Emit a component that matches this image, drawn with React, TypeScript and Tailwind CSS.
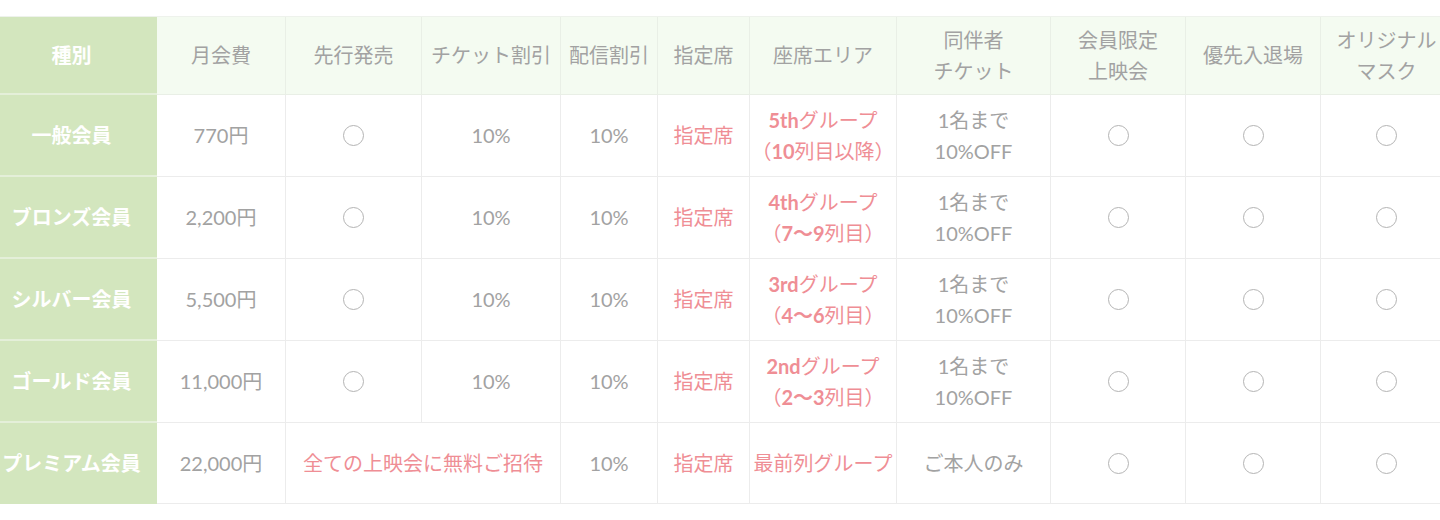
import type { ReactNode } from 'react';

type Cell = ReactNode | { span: number; content: ReactNode };

const headers = [
  '月会費',
  '先行発売',
  'チケット割引',
  '配信割引',
  '指定席',
  '座席エリア',
  <>同伴者<br />チケット</>,
  <>会員限定<br />上映会</>,
  '優先入退場',
  <>オリジナル<br />マスク</>,
];

const Circle = () => (
  <span className="inline-block w-[21px] h-[21px] rounded-full border-[1.5px] border-[#b4b4b4]" />
);

const Pink = ({ children }: { children: ReactNode }) => (
  <span className="text-[#ef8e95]">{children}</span>
);

const Area = ({ head, tail }: { head: string; tail: ReactNode }) => (
  <Pink>
    <b className="font-bold">{head}</b>グループ
    <br />
    {tail}
  </Pink>
);

const companion = <>1名まで<br />10%OFF</>;

const rows: { name: string; cells: Cell[] }[] = [
  {
    name: '一般会員',
    cells: ['770円', <Circle />, '10%', '10%', <Pink>指定席</Pink>,
      <Area head="5th" tail={<>（<b className="font-bold">10</b>列目以降）</>} />,
      companion, <Circle />, <Circle />, <Circle />],
  },
  {
    name: 'ブロンズ会員',
    cells: ['2,200円', <Circle />, '10%', '10%', <Pink>指定席</Pink>,
      <Area head="4th" tail={<>（<b className="font-bold">7〜9</b>列目）</>} />,
      companion, <Circle />, <Circle />, <Circle />],
  },
  {
    name: 'シルバー会員',
    cells: ['5,500円', <Circle />, '10%', '10%', <Pink>指定席</Pink>,
      <Area head="3rd" tail={<>（<b className="font-bold">4〜6</b>列目）</>} />,
      companion, <Circle />, <Circle />, <Circle />],
  },
  {
    name: 'ゴールド会員',
    cells: ['11,000円', <Circle />, '10%', '10%', <Pink>指定席</Pink>,
      <Area head="2nd" tail={<>（<b className="font-bold">2〜3</b>列目）</>} />,
      companion, <Circle />, <Circle />, <Circle />],
  },
  {
    name: 'プレミアム会員',
    cells: ['22,000円', { span: 2, content: <Pink>全ての上映会に無料ご招待</Pink> }, '10%',
      <Pink>指定席</Pink>, <Pink>最前列グループ</Pink>, 'ご本人のみ', <Circle />, <Circle />, <Circle />],
  },
];

const isSpan = (c: Cell): c is { span: number; content: ReactNode } =>
  typeof c === 'object' && c !== null && 'span' in (c as object);

export default function App() {
  return (
    <div
      className="w-[1440px] h-[520px] overflow-hidden bg-white pt-4"
      style={{ fontFamily: 'Lato, "Noto Sans CJK JP", sans-serif' }}
    >
      <div className="grid w-max grid-cols-[157px_129px_136px_139px_97px_92px_147px_154px_135px_135px_132px] grid-rows-[78px_82px_82px_82px_82px_81px] text-[20px] leading-[31px] text-[#a2a2a2] border-t border-[#eef2ec]">
        {/* header */}
        <div className="flex items-center justify-center bg-[#d3e6be] pr-[14px] font-semibold text-white border-b-2 border-[#e4efd9]">
          種別
        </div>
        {headers.map((h, i) => (
          <div
            key={i}
            className="flex items-center justify-center text-center bg-[#f4fbf1] border-r border-b border-[#e9efe6]"
          >
            <span>{h}</span>
          </div>
        ))}

        {/* body */}
        {rows.map((row, r) => (
          <div key={row.name} className="contents">
            <div
              className={
                r < rows.length - 1
                  ? 'flex items-center justify-center bg-[#d3e6be] pr-[14px] font-semibold text-white border-b-2 border-[#e4efd9]'
                  : 'flex items-center justify-center bg-[#d3e6be] pr-[14px] font-semibold text-white'
              }
            >
              {row.name}
            </div>
            {row.cells.map((c, i) =>
              isSpan(c) ? (
                <div
                  key={i}
                  className="col-span-2 flex items-center justify-center text-center border-r border-b border-[#ececec]"
                >
                  <span>{c.content}</span>
                </div>
              ) : (
                <div
                  key={i}
                  className="flex items-center justify-center text-center border-r border-b border-[#ececec]"
                >
                  <span className="flex flex-col items-center">{c}</span>
                </div>
              )
            )}
          </div>
        ))}
      </div>
    </div>
  );
}
